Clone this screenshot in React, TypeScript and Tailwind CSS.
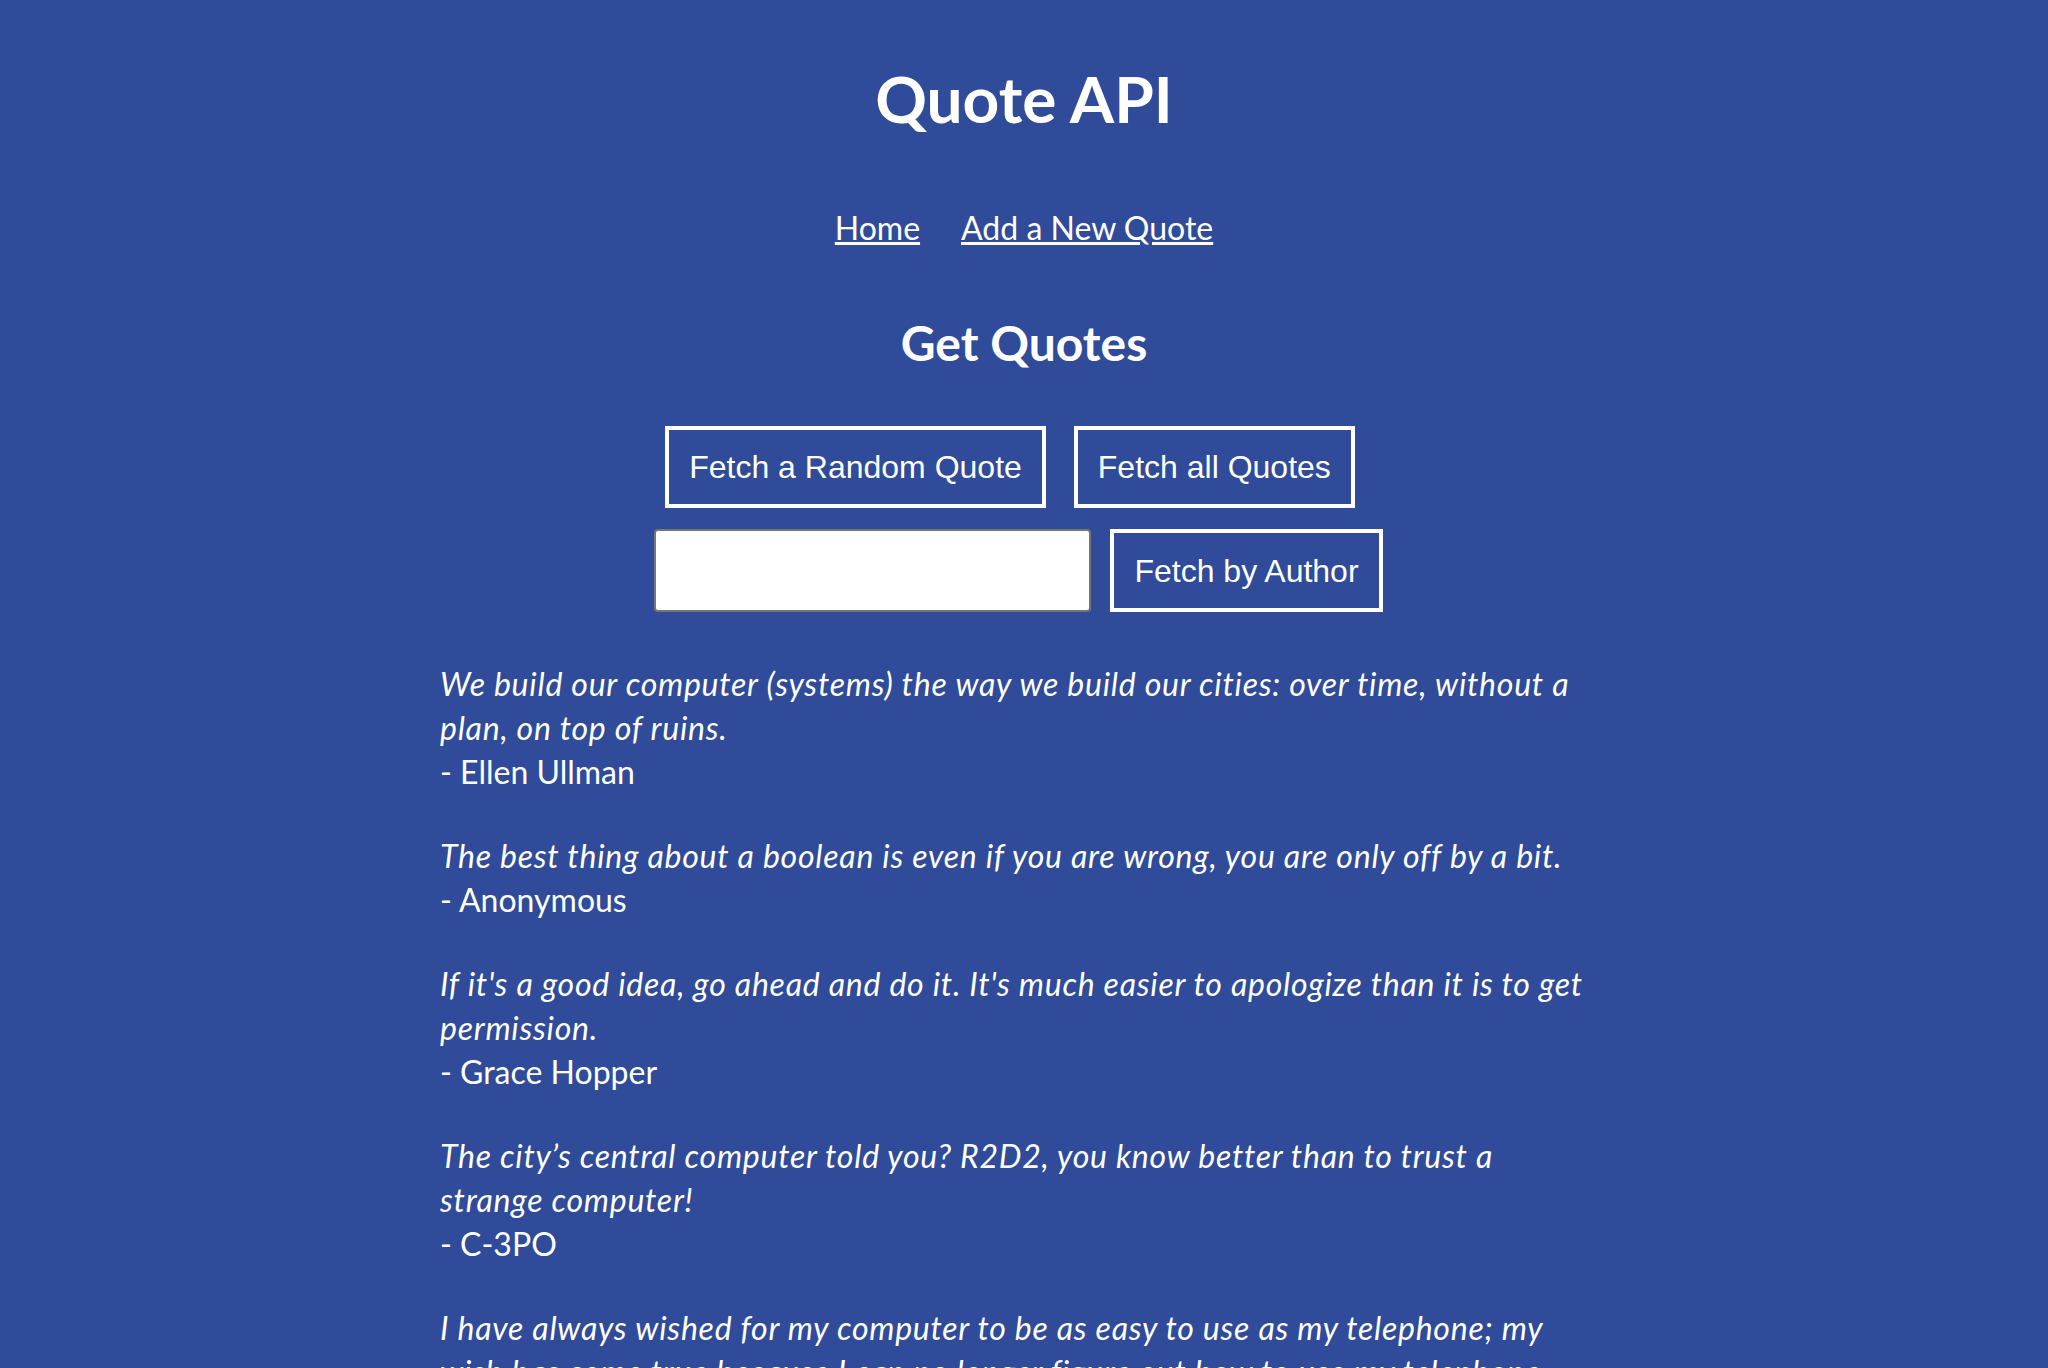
import { useState } from "react";

type Quote = { text: string; person: string };

const quotes: Quote[] = [
  {
    text: "We build our computer (systems) the way we build our cities: over time, without a plan, on top of ruins.",
    person: "Ellen Ullman"
  },
  {
    text: "The best thing about a boolean is even if you are wrong, you are only off by a bit.",
    person: "Anonymous"
  },
  {
    text: "If it's a good idea, go ahead and do it. It's much easier to apologize than it is to get permission.",
    person: "Grace Hopper"
  },
  {
    text: "The city\u2019s central computer told you? R2D2, you know better than to trust a strange computer!",
    person: "C-3PO"
  },
  {
    text: "I have always wished for my computer to be as easy to use as my telephone; my wish has come true because I can no longer figure out how to use my telephone.",
    person: "Bjarne Stroustrup"
  },
  {
    text: "Talk is cheap. Show me the code.",
    person: "Linus Torvalds"
  }
];

const btn =
  "border-4 border-white bg-transparent px-[20px] font-['Liberation_Sans',Arial,sans-serif] text-[32px] leading-none text-white";

export default function App() {
  const [author, setAuthor] = useState("");

  return (
    <div className="min-h-screen bg-[#2f4b99] pb-20 font-['Lato',sans-serif] text-white">
      {/* Header */}
      <header className="flex flex-col items-center pt-[60px]">
        <h1 className="text-[64px] font-bold leading-[77px]">Quote API</h1>
        <nav className="mt-[72px] flex gap-[41px] text-[32px] leading-[38px]">
          <a href="#" className="underline">
            Home
          </a>
          <a href="#" className="underline">
            Add a New Quote
          </a>
        </nav>
      </header>

      <main className="flex flex-col items-center">
        <h2 className="mt-[67px] text-[48px] font-bold leading-[58px]">
          Get Quotes
        </h2>

        {/* Buttons */}
        <div className="mt-[54px] flex justify-center gap-[28px] pr-[28px]">
          <button className={`${btn} h-[82px]`}>Fetch a Random Quote</button>
          <button className={`${btn} h-[82px]`}>Fetch all Quotes</button>
        </div>
        <div className="mt-[21px] flex justify-center gap-[19px] pr-[11px]">
          <input
            type="text"
            value={author}
            onChange={(e) => setAuthor(e.target.value)}
            className="h-[83px] w-[437px] rounded-[4px] border-2 border-[#767676] bg-white px-3 text-[32px] text-black outline-none"
          />
          <button className={`${btn} h-[83px]`}>Fetch by Author</button>
        </div>

        {/* Quotes */}
        <section className="mt-[50px] w-[1168px] pr-[18px] text-[32px] leading-[44px]">
          {quotes.map((q) => (
            <div key={q.person} className="mb-[40px]">
              <span className="italic tracking-[0.75px]">{q.text}</span>
              <br />
              <span>- {q.person}</span>
            </div>
          ))}
        </section>
      </main>
    </div>
  );
}
